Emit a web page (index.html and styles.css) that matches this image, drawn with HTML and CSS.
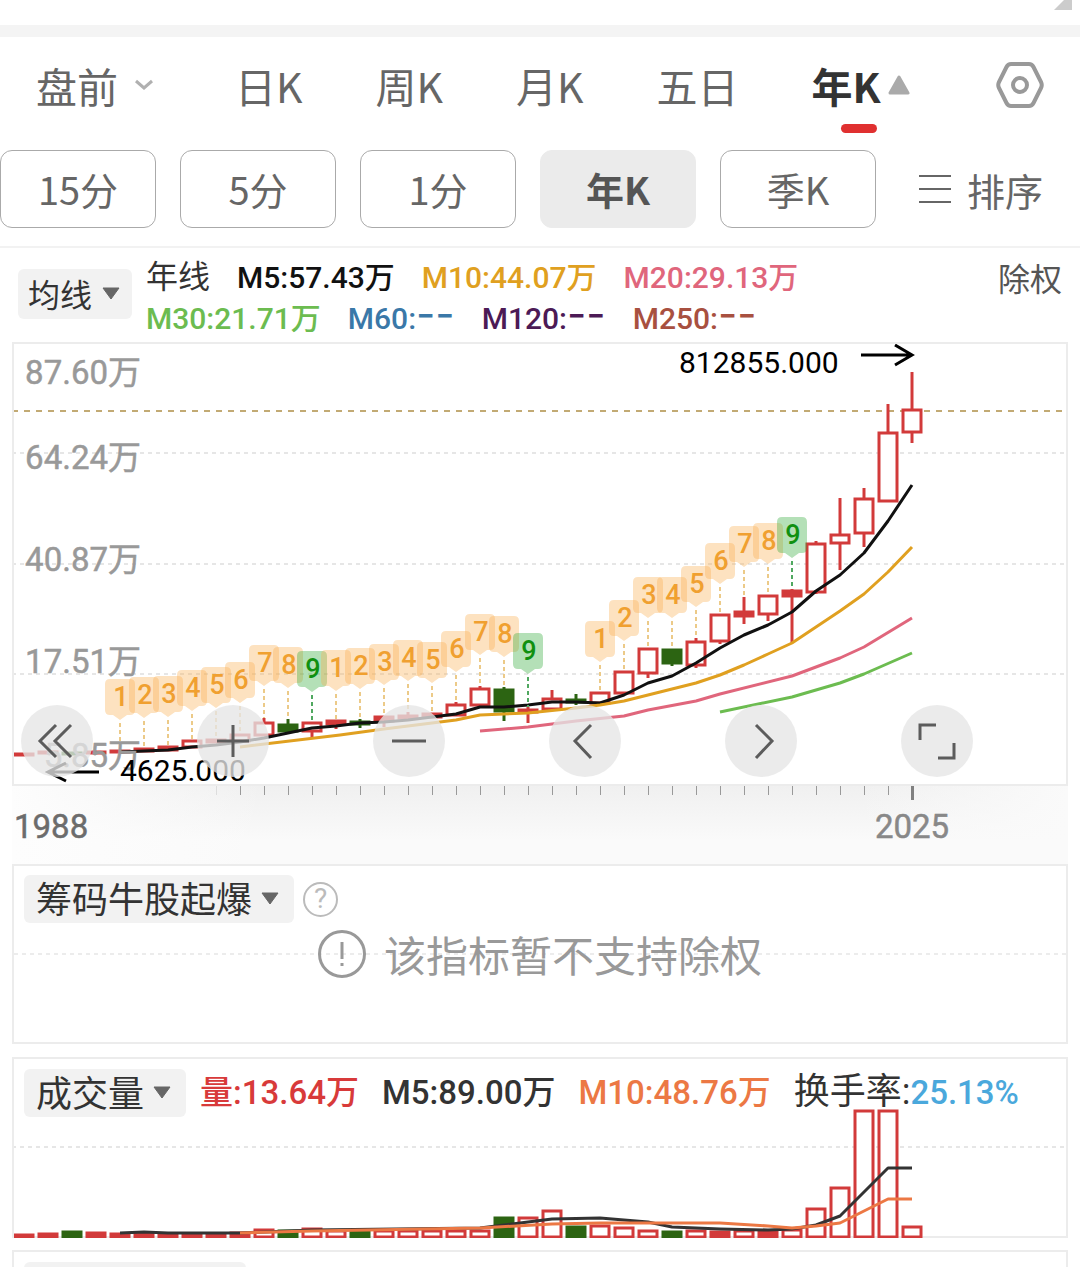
FILE: index.html
```
<!DOCTYPE html>
<html lang="zh-CN">
<head>
    <meta charset="UTF-8">
    <meta name="viewport" content="width=device-width, initial-scale=1.0">
    <title>年K</title>
    <link rel="stylesheet" href="styles.css">
</head>
<body>
    <div class="top-strip">
        <svg width="18" height="10" viewBox="0 0 18 10"><path d="M10 0H18V10H0Z" fill="#ccc"/></svg>
    </div>

    <nav class="tabs">
        <button class="tab tab-first">盘前
            <svg width="20" height="12" viewBox="0 0 20 12"><path d="M2 2L10 9L18 2" fill="none" stroke="#b0b0b0" stroke-width="3"/></svg>
        </button>
        <button class="tab">日K</button>
        <button class="tab">周K</button>
        <button class="tab">月K</button>
        <button class="tab">五日</button>
        <button class="tab active">年K
            <svg width="22" height="20" viewBox="0 0 22 20"><path d="M11 2L20 18H2Z" fill="#aaa" stroke="#aaa" stroke-width="3" stroke-linejoin="round"/></svg>
        </button>
        <button class="tab settings" aria-label="设置">
            <svg width="48" height="48" viewBox="0 0 48 48" fill="none" stroke="#999" stroke-width="4" stroke-linejoin="round">
                <path d="M15 3H33Q36 3 37.500 6L45 21Q46.500 24 45 27L37.500 42Q36 45 33 45H15Q12 45 10.500 42L3 27Q1.500 24 3 21L10.500 6Q12 3 15 3Z"/>
                <circle cx="24" cy="24" r="7"/>
            </svg>
        </button>
    </nav>

    <div class="periods">
        <button class="period">15分</button>
        <button class="period">5分</button>
        <button class="period">1分</button>
        <button class="period selected">年K</button>
        <button class="period">季K</button>
        <button class="sort">
            <svg width="34" height="32" viewBox="0 0 34 32"><path d="M1 3H33M1 16H33M1 29H33" stroke="#666" stroke-width="2"/></svg>
            排序
        </button>
    </div>

    <section class="averages">
        <div class="picker picker-small">
            <select aria-label="主图指标"><option>均线</option></select>
            <svg width="18" height="14" viewBox="0 0 18 14"><path d="M1 1H17L9 12Z" fill="#666" stroke="#666" stroke-linejoin="round"/></svg>
        </div>
        <div class="average-values">
            <span>年线</span>
            <span class="m5">M5:57.43万</span>
            <span class="m10">M10:44.07万</span>
            <span class="m20">M20:29.13万</span>
            <span class="m30">M30:21.71万</span>
            <span class="m60">M60:<span class="dash">--</span></span>
            <span class="m120">M120:<span class="dash">--</span></span>
            <span class="m250">M250:<span class="dash">--</span></span>
        </div>
        <button class="adjust">除权</button>
    </section>

    <main class="charts">
        <section class="price-chart">
            <svg id="price" viewBox="14 344 1052 440"></svg>
            <div class="chart-tools">
                <button aria-label="最左">
                    <svg width="40" height="40" viewBox="0 0 40 40"><path d="M19 4L3 20L19 36M34 4L18 20L34 36"/></svg>
                </button>
                <button aria-label="放大">
                    <svg width="40" height="40" viewBox="0 0 40 40"><path d="M4 20H36M20 4V36"/></svg>
                </button>
                <button aria-label="缩小">
                    <svg width="40" height="40" viewBox="0 0 40 40"><path d="M3 20H37"/></svg>
                </button>
                <button aria-label="左移">
                    <svg width="40" height="40" viewBox="0 0 40 40"><path d="M26 4L10 20L26 37"/></svg>
                </button>
                <button aria-label="右移">
                    <svg width="40" height="40" viewBox="0 0 40 40"><path d="M15 4L31 20L15 37"/></svg>
                </button>
                <button aria-label="全屏">
                    <svg width="40" height="40" viewBox="0 0 40 40"><path d="M3 19V4H19M21 37H37V22"/></svg>
                </button>
            </div>
        </section>
        <div class="time-axis">
            <svg id="axis" viewBox="12 786 1056 78"></svg>
        </div>

        <section class="panel chips">
            <div class="panel-head">
                <div class="picker">
                    <select aria-label="副图指标"><option>筹码牛股起爆</option></select>
                    <svg width="18" height="14" viewBox="0 0 18 14"><path d="M1 1H17L9 12Z" fill="#666" stroke="#666" stroke-linejoin="round"/></svg>
                </div>
                <button class="help" aria-label="帮助">?</button>
            </div>
            <p class="notice">
                <svg width="48" height="48" viewBox="0 0 48 48" fill="none" stroke="#999" stroke-width="3">
                    <circle cx="24" cy="24" r="22.500"/>
                    <path d="M24 12V29M24 33V36"/>
                </svg>
                该指标暂不支持除权
            </p>
        </section>

        <section class="panel volume">
            <svg id="volume" viewBox="14 1059 1052 179"></svg>
            <div class="panel-head">
                <div class="picker">
                    <select aria-label="成交量指标"><option>成交量</option></select>
                    <svg width="18" height="14" viewBox="0 0 18 14"><path d="M1 1H17L9 12Z" fill="#666" stroke="#666" stroke-linejoin="round"/></svg>
                </div>
                <div class="volume-values">
                    <span class="vol">量:13.64万</span>
                    <span>M5:89.00万</span>
                    <span class="vol-m10">M10:48.76万</span>
                    <span class="turnover">换手率:<span class="rate">25.13%</span></span>
                </div>
            </div>
        </section>

        <section class="panel next-panel">
            <div class="placeholder"></div>
        </section>
    </main>

    <script src="chart.js"></script>
</body>
</html>
```
FILE: styles.css
```
* {
    box-sizing: border-box;
}
body {
    height: 100vh;
    margin: 0;
    overflow: hidden;
    background: #fff;
    color: #333;
    font-family: "Noto Sans CJK SC", sans-serif;
}
button, select {
    margin: 0;
    padding: 0;
    border: 0;
    background: none;
    color: inherit;
    font: inherit;
    cursor: pointer;
}
svg {
    display: block;
    flex: none;
}

/* top strip */
.top-strip {
    display: flex;
    justify-content: flex-end;
    height: 37px;
    padding-right: 8px;
    border-bottom: 12px solid #f4f4f4;
}

/* period tabs */
.tabs {
    display: flex;
    align-items: center;
    gap: 73px;
    height: 113px;
    padding: 0 36px 18px;
}
.tab {
    position: relative;
    display: flex;
    align-items: center;
    color: #666;
    font-size: 41px;
    line-height: 60px;
    white-space: nowrap;
}
.tab-first {
    gap: 16px;
    margin-right: 8px;
}
.tab.active {
    gap: 7px;
    color: #333;
    font-weight: 700;
}
.tab.active::after {
    content: "";
    position: absolute;
    bottom: -18px;
    left: 50%;
    width: 36px;
    height: 9px;
    margin-left: -20px;
    border-radius: 5px;
    background: #e03030;
}
.settings {
    margin-left: auto;
}

.periods {
    display: flex;
    gap: 24px;
    padding: 0 37px 18px 0;
    border-bottom: 2px solid #f2f2f2;
}
.period {
    flex: 1;
    height: 78px;
    padding-bottom: 2px;
    border: 1px solid #aaa;
    border-radius: 12px;
    color: #666;
    font-size: 38px;
}
.period.selected {
    border-color: #ebebeb;
    background: #ebebeb;
    color: #555;
    font-weight: 700;
}
.sort {
    display: flex;
    align-items: center;
    gap: 15px;
    margin-left: 18px;
    color: #666;
    font-size: 38px;
}

/* moving averages */
.averages {
    display: flex;
    align-items: flex-start;
    padding: 9px 18px 3px;
    font-size: 32px;
    line-height: 41px;
}
.picker {
    display: inline-grid;
    align-items: center;
}
.picker select,
.picker svg {
    grid-area: 1 / 1;
}
.picker select {
    height: 48px;
    padding: 0 41px 4px 12px;
    border-radius: 6px;
    background: #f2f2f2;
    color: #333;
    font-size: 36px;
    line-height: 44px;
    appearance: none;
}
.picker svg {
    justify-self: end;
    margin-right: 15px;
    pointer-events: none;
}
.picker-small {
    margin-top: 12px;
}
.picker-small select {
    height: 50px;
    padding: 0 39px 2px 10px;
    font-size: 32px;
    line-height: 48px;
}
.picker-small svg {
    margin-right: 12px;
}
.average-values {
    display: flex;
    flex: 1;
    flex-wrap: wrap;
    column-gap: 27px;
    max-width: 700px;
    margin-left: 14px;
    font-family: Roboto, "Noto Sans CJK SC", sans-serif;
    font-size: 30px;
    font-weight: 500;
}
.average-values > span:first-child {
    font-size: 32px;
    font-weight: 400;
}
.dash {
    font-family: Inter, sans-serif;
    font-size: 42px;
    font-weight: 400;
    line-height: 1px;
}
.m5 { color: #111; }
.m10 { color: #e0a020; }
.m20 { color: #e0667c; }
.m30 { color: #6cbc50; }
.m60 { color: #3a78a8; }
.m120 { color: #4c1a56; }
.m250 { color: #a85040; }
.adjust {
    margin-left: auto;
    color: #555;
}

/* charts */
.charts {
    padding: 0 12px;
}
.price-chart {
    position: relative;
    border: 2px solid #ececec;
}
.price-chart svg,
.time-axis svg,
.volume > svg {
    width: 100%;
}
.chart-tools {
    position: absolute;
    right: -11px;
    bottom: 7px;
    left: 7px;
    display: grid;
    grid-template-columns: repeat(6, 1fr);
}
.chart-tools button {
    display: grid;
    place-items: center;
    width: 72px;
    height: 72px;
    border-radius: 50%;
    background: rgba(230, 230, 230, 0.78);
}
.chart-tools svg {
    width: 40px;
    fill: none;
    stroke: #5c5c5c;
    stroke-width: 3;
}
.time-axis {
    background:
        linear-gradient(to right, #fdfdfd 0, rgba(253, 253, 253, 0) 24%, rgba(250, 250, 250, 0) 80%, #fafafa 100%),
        linear-gradient(#f0f0f0, #fafafa 70%);
}

.panel {
    border: 2px solid #ececec;
}
.panel-head {
    display: flex;
    align-items: center;
    padding: 9px 10px;
}
.chips {
    height: 180px;
    margin-bottom: 13px;
    background: repeating-linear-gradient(to right, #ececec 0 4px, transparent 4px 8px) 0 87px / 100% 2px no-repeat;
}
.help {
    width: 35px;
    height: 35px;
    margin-left: 9px;
    border: 2px solid #bbb;
    border-radius: 50%;
    color: #bbb;
    font-family: Roboto, sans-serif;
    font-size: 28px;
    line-height: 30px;
}
.notice {
    display: flex;
    align-items: center;
    justify-content: center;
    gap: 18px;
    margin: -5px 0 0;
    color: #999;
    font-size: 42px;
    line-height: 54px;
}
.volume {
    display: grid;
    margin-bottom: 12px;
    border-bottom: 0;
}
.volume > * {
    grid-area: 1 / 1;
}
.volume .panel-head {
    align-self: start;
}
.volume-values {
    display: flex;
    gap: 23px;
    align-items: baseline;
    margin-left: 14px;
    font-family: Roboto, "Noto Sans CJK SC", sans-serif;
    font-size: 33px;
    font-weight: 500;
    line-height: 48px;
    white-space: nowrap;
}
.turnover {
    font-size: 36px;
    font-weight: 400;
}
.vol { color: #d83a3a; }
.vol-m10 { color: #ec7844; }
.rate {
    color: #4aa8dc;
    font-size: 33px;
    font-weight: 500;
}
.next-panel {
    padding: 10px;
}
.placeholder {
    width: 222px;
    height: 48px;
    border-radius: 6px;
    background: #f2f2f2;
}

/* svg drawing */
.grid-line {
    stroke: #e6e6e6;
    stroke-width: 2;
    stroke-dasharray: 4 4;
}
.last-price {
    stroke: #c2aa74;
    stroke-width: 2;
    stroke-dasharray: 6 6;
}
.price-label {
    fill: #999;
    font: 400 33px Roboto, "Noto Sans CJK SC", sans-serif;
    stroke: #999;
    stroke-width: 0.5;
    text-anchor: end;
}
.extreme {
    fill: #000;
    font: 400 30px Roboto, sans-serif;
}
.arrow {
    fill: none;
    stroke: #000;
    stroke-width: 3;
}
.up {
    fill: #fff;
    stroke: #d23a3a;
    stroke-width: 3;
}
.up.thin {
    fill: #d23a3a;
}
.down {
    fill: #2c6412;
    stroke: #2c6412;
    stroke-width: 3;
}
.line {
    fill: none;
    stroke-width: 3;
    stroke-linejoin: round;
}
.badge {
    fill: #f9b050;
    fill-opacity: 0.36;
}
.badge-text {
    fill: #f0a030;
    font: 500 27px Roboto, sans-serif;
    text-anchor: middle;
}
.badge-stem {
    stroke: #ecca88;
    stroke-width: 2;
    stroke-dasharray: 4 3;
}
.badge.nine {
    fill: #30a838;
}
.badge-text.nine {
    fill: #109010;
}
.badge-stem.nine {
    stroke: #50a860;
}
.tick {
    stroke: #999;
}
.tick.faint {
    stroke: #ddd;
}
.tick.last {
    stroke: #808080;
    stroke-width: 3;
}
.year {
    fill: #6c6c6c;
    font: 400 33px Roboto, sans-serif;
    stroke: #6c6c6c;
    stroke-width: 0.5;
}
.year.last {
    fill: #888;
    stroke: #888;
    text-anchor: middle;
}
```
FILE: chart.js
```
const price = document.getElementById('price');
const axis = document.getElementById('axis');
const volume = document.getElementById('volume');

const STEP = 24;
const x = i => STEP + i * STEP;

// high, body top, body bottom, low, direction
const candles = [
    [753, 753, 755, 755, 'up'], [751, 751, 753, 753, 'up'], [752, 752, 754, 754, 'down'],
    [751, 751, 753, 753, 'up'], [750, 750, 752, 752, 'up'], [748, 748, 751, 751, 'up'],
    [746, 746, 750, 750, 'up'], [740, 740, 747, 747, 'up'], [739, 739, 742, 742, 'up'],
    [734, 734, 741, 741, 'up'], [718, 722, 735, 735, 'up'], [719, 724, 731, 733, 'down'],
    [722, 722, 731, 738, 'up'], [720, 720, 724, 729, 'up'], [719, 721, 724, 728, 'down'],
    [716, 716, 721, 727, 'up'], [712, 715, 718, 718, 'up'], [713, 713, 717, 717, 'up'],
    [702, 704, 715, 716, 'up'], [686, 688, 705, 706, 'up'], [687, 689, 711, 721, 'down'],
    [707, 709, 712, 723, 'up'], [690, 698, 709, 709, 'up'], [694, 699, 702, 705, 'down'],
    [692, 692, 703, 703, 'up'], [671, 671, 693, 693, 'up'], [648, 648, 673, 678, 'up'],
    [649, 649, 663, 666, 'down'], [638, 641, 665, 668, 'up'], [614, 614, 641, 644, 'up'],
    [597, 611, 616, 624, 'up'], [595, 595, 614, 621, 'up'], [589, 590, 596, 643, 'up'],
    [541, 543, 592, 594, 'up'], [498, 534, 543, 570, 'up'], [488, 498, 533, 547, 'up'],
    [404, 432, 501, 501, 'up'], [372, 409, 432, 443, 'up']
];

const averages = [
    { color: '#111', points: [[120, 752], [144, 751], [168, 750], [192, 747], [216, 745], [240, 742], [264, 738], [288, 733], [312, 728], [336, 726], [360, 723], [384, 722], [408, 720], [432, 717], [456, 714], [480, 707], [504, 707], [528, 705], [552, 702], [576, 702], [600, 703], [624, 695], [648, 683], [672, 676], [696, 663], [720, 648], [744, 635], [768, 625], [792, 612], [816, 591], [840, 575], [864, 553], [888, 521], [912, 485]] },
    { color: '#e0a020', points: [[240, 747], [340, 735], [384, 729], [432, 723], [456, 720], [480, 715], [528, 713], [576, 708], [600, 705], [624, 701], [648, 695], [672, 689], [696, 683], [720, 675], [744, 665], [768, 654], [792, 643], [816, 627], [840, 611], [864, 594], [888, 572], [912, 547]] },
    { color: '#e0667c', points: [[480, 731], [528, 727], [576, 721], [624, 716], [648, 710], [696, 701], [720, 694], [792, 676], [840, 658], [864, 647], [912, 618]] },
    { color: '#6cbc50', points: [[720, 712], [792, 697], [840, 683], [864, 674], [912, 653]] }
];

// first candle of each run and the top of every badge in it
const runs = [
    { start: 4, tops: [679, 677, 676, 670, 667, 662, 645, 647, 651] },
    { start: 13, tops: [650, 648, 644, 640, 642, 631, 614, 616, 633] },
    { start: 24, tops: [621, 600, 577, 577, 566, 543, 526, 523, 517] }
];

const bars = [1235, 1234, 1232, 1233, 1234, 1234, 1234, 1234, 1234, 1233, 1230, 1231, 1229, 1231, 1231, 1231, 1231, 1231, 1231, 1231, 1218, 1218, 1211, 1227, 1226, 1228, 1231, 1232, 1231, 1232, 1231, 1232, 1230, 1209, 1188, 1111, 1111, 1227];
const downBars = [2, 11, 14, 20, 23, 27];

const volumeAverages = [
    { color: '#333', points: [[120, 1233], [144, 1232], [168, 1233], [240, 1233], [312, 1230], [480, 1228], [504, 1225], [528, 1222], [552, 1219], [600, 1218], [648, 1222], [672, 1227], [720, 1229], [768, 1230], [792, 1229], [816, 1225], [840, 1216], [888, 1168], [912, 1168]] },
    { color: '#ec7844', points: [[240, 1233], [312, 1231], [480, 1228], [552, 1224], [600, 1223], [720, 1223], [768, 1226], [792, 1228], [816, 1226], [840, 1223], [888, 1199], [912, 1199]] }
];

function hLine(y, cls) {
    return `<line class="${cls}" x1="12" y1="${y}" x2="1064" y2="${y}"/>`;
}

// bodies too low to show a hollow middle are filled
function body(i, top, bottom, cls) {
    const height = Math.max(bottom - top - 1, 1);
    const thin = height < 6 ? ' thin' : '';
    return `<rect class="${cls}${thin}" x="${x(i) - 9}" y="${top + 1}" width="18" height="${height}"/>`;
}

function polyline(line) {
    return `<polyline class="line" stroke="${line.color}" points="${line.points.join(' ')}"/>`;
}

function drawPrice() {
    let out = [453, 564, 674].map(y => hLine(y, 'grid-line')).join('');
    out += hLine(411, 'last-price');

    candles.forEach(([high, top, bottom, low, dir], i) => {
        out += `<line class="${dir}" x1="${x(i)}" y1="${high}" x2="${x(i)}" y2="${low}"/>`;
        out += body(i, top, bottom, dir);
    });
    out += averages.map(polyline).join('');

    runs.forEach(run => run.tops.forEach((top, n) => {
        const cx = x(run.start + n);
        const nine = n === 8 ? ' nine' : '';
        out += `<line class="badge-stem${nine}" x1="${cx}" y1="${top + 44}" x2="${cx}" y2="${candles[run.start + n][0]}"/>`;
        out += `<path class="badge${nine}" d="M${cx - 10} ${top}h20q5 0 5 5v26q0 5 -5 5h-3l-7 5l-7 -5h-3q-5 0 -5 -5v-26q0 -5 5 -5z"/>`;
        out += `<text class="badge-text${nine}" x="${cx + 1}" y="${top + 27}">${n + 1}</text>`;
    }));

    [['87.60万', 384], ['64.24万', 469], ['40.87万', 571], ['17.51万', 673], ['5.85万', 767]].forEach(([text, y]) => {
        out += `<text class="price-label" x="141" y="${y}">${text}</text>`;
    });
    out += '<text class="extreme" x="679" y="373">812855.000</text>';
    out += '<path class="arrow" d="M861 355H912M895 345L912 355L895 365"/>';
    out += '<text class="extreme" x="120" y="781">4625.000</text>';
    out += '<path class="arrow" d="M99 772H48M66 763L48 772L66 781"/>';
    price.innerHTML = out;
}

function drawAxis() {
    let out = '';
    for (let i = 8; i < 37; i++) {
        out += `<path class="tick${i === 8 ? ' faint' : ''}" d="M${x(i) + 0.5} 786v9"/>`;
    }
    out += `<path class="tick last" d="M${x(37) + 0.5} 786v14"/>`;
    out += '<text class="year" x="14" y="838">1988</text>';
    out += '<text class="year last" x="912" y="838">2025</text>';
    axis.innerHTML = out;
}

function drawVolume() {
    let out = hLine(1147, 'grid-line') + '<path stroke="#ececec" stroke-width="2" d="M12 1237H1068"/>';
    bars.forEach((top, i) => {
        out += body(i, top - 1, 1237, downBars.includes(i) ? 'down' : 'up');
    });
    out += volumeAverages.map(polyline).join('');
    volume.innerHTML = out;
}

drawPrice();
drawAxis();
drawVolume();
```
